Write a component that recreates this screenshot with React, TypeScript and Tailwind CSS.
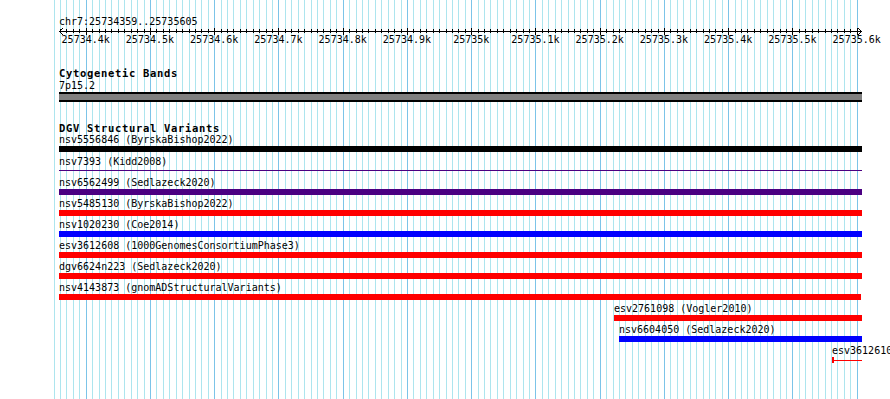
const STEP = 6.425;
const tickX = (k: number) => 60 + k * STEP;

const rulerLabels = [
  "25734.4k", "25734.5k", "25734.6k", "25734.7k", "25734.8k", "25734.9k", "25735k",
  "25735.1k", "25735.2k", "25735.3k", "25735.4k", "25735.5k", "25735.6k",
];

type Variant = {
  label: string;
  start: number;
  end: number;
  color: string;
  kind: "bar" | "line" | "tick";
};

const variants: Variant[] = [
  { label: "nsv5556846 (ByrskaBishop2022)", start: 59, end: 862, color: "#000000", kind: "bar" },
  { label: "nsv7393 (Kidd2008)", start: 59, end: 862, color: "#4b0082", kind: "line" },
  { label: "nsv6562499 (Sedlazeck2020)", start: 59, end: 862, color: "#4b0082", kind: "bar" },
  { label: "nsv5485130 (ByrskaBishop2022)", start: 59, end: 862, color: "#ff0000", kind: "bar" },
  { label: "nsv1020230 (Coe2014)", start: 59, end: 862, color: "#0000ff", kind: "bar" },
  { label: "esv3612608 (1000GenomesConsortiumPhase3)", start: 59, end: 862, color: "#ff0000", kind: "bar" },
  { label: "dgv6624n223 (Sedlazeck2020)", start: 59, end: 862, color: "#ff0000", kind: "bar" },
  { label: "nsv4143873 (gnomADStructuralVariants)", start: 59, end: 861, color: "#ff0000", kind: "bar" },
  { label: "esv2761098 (Vogler2010)", start: 614, end: 862, color: "#ff0000", kind: "bar" },
  { label: "nsv6604050 (Sedlazeck2020)", start: 619, end: 862, color: "#0000ff", kind: "bar" },
  { label: "esv3612610 (1000GenomesConsortiumPhase3)", start: 832, end: 862, color: "#ff0000", kind: "tick" },
];

function GridLines() {
  const lines = [];
  for (let k = -1; k <= 124; k++) {
    const x = Math.round(tickX(k)) + 0.5;
    const major = ((k % 10) + 10) % 10 === 4;
    lines.push(
      <line key={k} x1={x} x2={x} y1={0} y2={399} stroke={major ? "#7cc4e8" : "#ade5ee"} strokeWidth={1} />
    );
  }
  return (
    <svg className="absolute inset-0" width={890} height={399} shapeRendering="crispEdges">
      {lines}
    </svg>
  );
}

function Ruler() {
  const ticks = [];
  for (let k = 0; k <= 124; k++) {
    const x = Math.round(tickX(k) - 59) + 0.5;
    const major = k % 10 === 4;
    ticks.push(<line key={k} x1={x} x2={x} y1={major ? 1 : 2} y2={major ? 8 : 6} stroke="#000" />);
  }
  return (
    <div className="relative h-[40px] w-[803px]">
      <svg width={803} height={10} shapeRendering="crispEdges" className="block">
        <line x1={0} x2={803} y1={4.5} y2={4.5} stroke="#000" />
        <polyline points="4,1 0.5,4.5 4,8" fill="none" stroke="#000" />
        <polyline points="799,1 802.5,4.5 799,8" fill="none" stroke="#000" />
        {ticks}
      </svg>
      {rulerLabels.map((text, j) => (
        <span
          key={text}
          className="absolute top-[7px] h-[11px] -translate-x-1/2 whitespace-nowrap leading-[11px]"
          style={{ left: tickX(4 + j * 10) - 59 }}
        >
          {text}
        </span>
      ))}
    </div>
  );
}

function VariantRow({ v }: { v: Variant }) {
  const width = v.end - v.start;
  return (
    <div className="flex h-[21.1px] flex-col" style={{ paddingLeft: v.start - 59 }}>
      <div className="h-[13px] whitespace-nowrap leading-[13px]">{v.label}</div>
      {v.kind === "bar" && <div className="h-[6px]" style={{ width, backgroundColor: v.color }} />}
      {v.kind === "line" && (
        <div className="flex h-[6px] items-center" style={{ width }}>
          <div className="h-px w-full" style={{ backgroundColor: v.color }} />
        </div>
      )}
      {v.kind === "tick" && (
        <div className="flex h-[6px] items-center" style={{ width }}>
          <div className="h-[6px] w-[2px]" style={{ backgroundColor: v.color }} />
          <div className="h-px flex-1" style={{ backgroundColor: v.color }} />
        </div>
      )}
    </div>
  );
}

export default function App() {
  return (
    <div className="relative h-[399px] w-[890px] overflow-hidden bg-white text-[10px] text-black [font-family:'DejaVu_Sans_Mono',monospace]">
      <GridLines />
      <div className="relative flex w-[862px] flex-col pl-[59px] pt-[16px]">
        <div className="h-[11px] whitespace-nowrap leading-[11px]">chr7:25734359..25735605</div>
        <Ruler />

        <div className="h-[12px] whitespace-nowrap text-[10.5px] font-bold leading-[12px] tracking-[0.68px]">
          Cytogenetic Bands
        </div>
        <div className="h-[13px] leading-[13px]">7p15.2</div>
        <div className="h-[10px] w-[803px] border-y-2 border-black bg-[#808080]" />

        <div className="mt-[20px] h-[12px] whitespace-nowrap text-[10.5px] font-bold leading-[12px] tracking-[0.68px]">
          DGV Structural Variants
        </div>
        <div className="mt-[-0.6px] flex flex-col">
          {variants.map((v) => (
            <VariantRow key={v.label} v={v} />
          ))}
        </div>
      </div>
    </div>
  );
}
